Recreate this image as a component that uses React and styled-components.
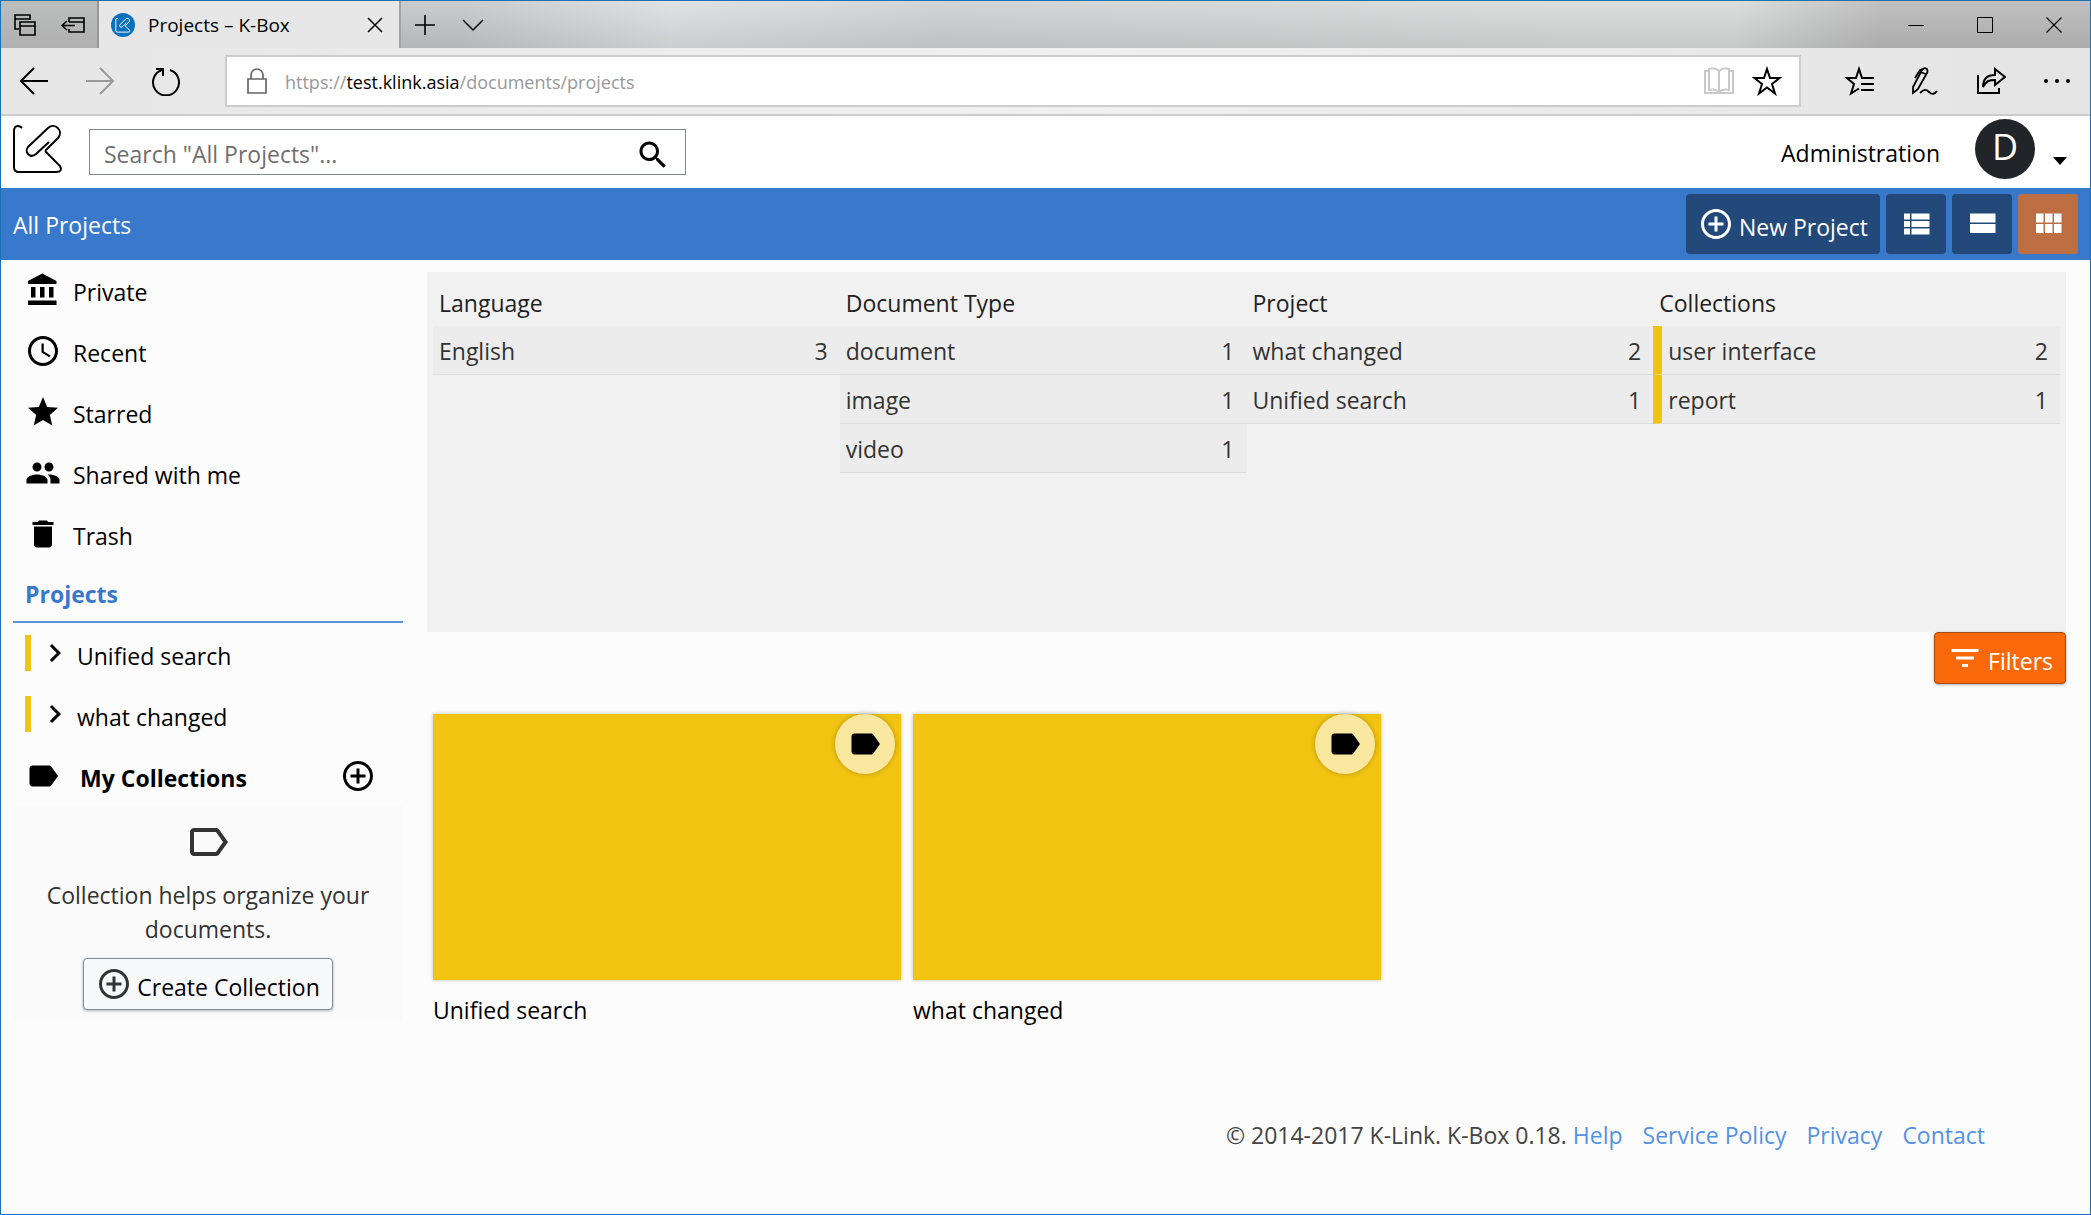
import React from "react";
import styled, { createGlobalStyle, css } from "styled-components";

const blue = "#3879cb";
const yellow = "#f0c410";

const GlobalStyle = createGlobalStyle`
  *, *::before, *::after { box-sizing: border-box; }
  body {
    margin: 0;
    background: #fcfcfc;
    color: #000;
    font-family: "Open Sans", "Noto Sans", sans-serif;
    font-size: 23px;
    line-height: 34px;
  }
  button, input { font: inherit; color: inherit; margin: 0; }
  button { border: 0; background: none; padding: 0; }
  a { color: inherit; text-decoration: none; }
  ul, p, h2, h3 { margin: 0; padding: 0; font: inherit; list-style: none; }
  svg { display: block; flex: none; }
`;

const Window = styled.div`
  display: flex;
  flex-direction: column;
  min-height: 100vh;
  border: 1px solid #1b71b6;
`;

/* ---- browser chrome ---- */

const TitleBar = styled.div`
  display: flex;
  height: 47px;
  background: linear-gradient(rgba(255, 255, 255, 0.1), rgba(0, 0, 0, 0.08)),
    linear-gradient(90deg, #c2c4c6 0, #c4c6c8 22%, #dcdfe1 32%, #cfd0d1 45%, #d8d9d9 75%, #d8d9d9 83%, #bababa 90%, #bababa 100%);
`;

const SetAside = styled.div`
  display: flex;
  align-items: center;
  gap: 25px;
  width: 98px;
  padding-left: 13px;
  border-right: 2px solid #999;
  background: linear-gradient(#bcbdbd, #b0b0b0);
`;

const Tab = styled.div`
  display: flex;
  align-items: center;
  width: 302px;
  padding: 0 16px 0 12px;
  border-right: 2px solid #a3a3a3;
  background: #e7e7e7;
  font-size: 19px;
`;

const TabTitle = styled.span`
  flex: 1;
  margin-left: 13px;
  white-space: nowrap;
`;

const TabTools = styled.div`
  display: flex;
  align-items: center;
  flex: 1;
  gap: 26px;
  padding-left: 13px;
`;

const WindowButtons = styled.div`
  display: flex;
  align-items: center;
  gap: 53px;
  padding-right: 28px;
`;

const Toolbar = styled.div`
  display: flex;
  align-items: center;
  height: 68px;
  padding-right: 19px;
  border-bottom: 2px solid #ccc;
  background: linear-gradient(90deg, #e6e6e6, #f0f0f0 50%, #e4e4e4);
`;

const NavButtons = styled.div`
  display: flex;
  align-items: center;
  gap: 36px;
  width: 224px;
  padding-left: 18px;
`;

const AddressBar = styled.div`
  display: flex;
  align-items: center;
  flex: 1;
  gap: 18px;
  height: 52px;
  padding: 0 17px 0 20px;
  border: 2px solid #ccc;
  background: #fff;
  font-size: 18px;
`;

const Url = styled.span`
  flex: 1;
  padding-top: 2px;
  color: #999;
  b { font-weight: 400; color: #000; }
`;

const ToolbarActions = styled.div`
  display: flex;
  align-items: center;
  gap: 37px;
  margin-left: 43px;
`;

/* ---- application header ---- */

const Header = styled.header`
  display: flex;
  align-items: center;
  height: 72px;
  padding: 0 23px 0 12px;
  background: #fff;
`;

const HomeLink = styled.a`
  padding-bottom: 6px;
`;

const SearchForm = styled.form`
  display: flex;
  align-items: center;
  width: 597px;
  height: 46px;
  margin-left: 27px;
  padding: 0 14px;
  border: 1px solid #7f8890;
  background: #fff;
`;

const SearchInput = styled.input`
  flex: 1;
  min-width: 0;
  padding: 3px 0 0;
  border: 0;
  background: none;
  outline: 0;
  &::placeholder { color: #6f6f6f; opacity: 1; }
`;

const SearchButton = styled.button`
  padding-top: 6px;
`;

const AdminLink = styled.a`
  margin-left: auto;
  padding-top: 2px;
`;

const Account = styled.button`
  display: flex;
  align-items: center;
  gap: 18px;
  margin-left: 35px;
`;

const Avatar = styled.span`
  width: 60px;
  height: 60px;
  margin-bottom: 6px;
  border-radius: 50%;
  background: #212529;
  color: #fff;
  font-size: 36px;
  line-height: 56px;
  text-align: center;
`;

const Caret = styled.span`
  margin-top: 18px;
  border: 7px solid transparent;
  border-top: 8px solid #000;
  border-bottom: 0;
`;

const ActionBar = styled.div`
  display: flex;
  align-items: center;
  gap: 6px;
  height: 72px;
  padding: 0 12px;
  background: ${blue};
  color: #fff;
`;

const PageTitle = styled.h2`
  flex: 1;
  padding-top: 2px;
`;

const BarButton = styled.button`
  display: flex;
  align-items: center;
  justify-content: center;
  gap: 5px;
  min-width: 60px;
  height: 60px;
  padding: 0 12px;
  border-radius: 4px;
  background: ${(p) => (p.$active ? "#bd6e43" : "#23487a")};
`;

const ButtonText = styled.span`
  padding-top: 6px;
`;

/* ---- body ---- */

const Body = styled.div`
  display: flex;
  flex: 1;
  padding: 0 24px 0 12px;
`;

const Sidebar = styled.nav`
  flex: none;
  width: 390px;
  margin-right: 24px;
`;

const NavLink = styled.a`
  display: flex;
  align-items: center;
  height: 61px;
  padding: 0 0 2px 12px;
  gap: 12px;
`;

const NavLabel = styled.span`
  padding-top: 5px;
`;

const ProjectsHeading = styled.h3`
  height: 58px;
  padding: 12px 12px 0;
  border-bottom: 2px solid #5a93dc;
  color: ${blue};
  font-weight: 700;
`;

const ProjectLink = styled.a`
  display: flex;
  align-items: center;
  height: 61px;
  margin-left: 12px;
  padding-bottom: 1px;
`;

const ProjectMark = styled.span`
  display: flex;
  align-items: center;
  width: 52px;
  height: 36px;
  padding-left: 6px;
  border-left: 6px solid ${yellow};
`;

const CollectionsHeading = styled.h3`
  display: flex;
  align-items: center;
  height: 61px;
  padding: 0 27px 0 12px;
  font-weight: 700;
`;

const CollectionsTitle = styled.span`
  flex: 1;
  padding: 5px 0 0 19px;
`;

const EmptyNote = styled.div`
  display: flex;
  flex-direction: column;
  align-items: center;
  gap: 12px;
  padding: 12px 24px;
  background: #fafafa;
  color: #333;
  text-align: center;
`;

const FramedButton = styled.button`
  display: flex;
  align-items: center;
  gap: 5px;
  height: 52px;
  padding: 0 12px;
  border: 1px solid #868c92;
  border-radius: 4px;
  background: #f8f9fb;
  box-shadow: 0 1px 3px rgba(0, 0, 0, 0.3);
  color: #000;
`;

const Main = styled.main`
  display: flex;
  flex: 1;
  flex-direction: column;
  min-width: 0;
  padding-top: 12px;
`;

const FilterPanel = styled.section`
  display: grid;
  grid-template-columns: repeat(4, 1fr);
  min-height: 360px;
  padding: 6px;
  background: #f1f1f1;
`;

const FilterTitle = styled.h3`
  height: 48px;
  padding: 8px 6px 0;
  color: #222;
`;

const FilterRow = styled.li`
  display: flex;
  justify-content: space-between;
  height: 49px;
  padding: 8px 12px 0 6px;
  border-bottom: 1px solid #dedede;
  background: #ececec;
  color: #333;
  ${(p) => p.$marked && css`border-left: 9px solid ${yellow};`}
`;

const FiltersButton = styled(FramedButton)`
  align-self: flex-end;
  border-color: #b04a0c;
  background: #fa6909;
  color: #fff;
`;

const CardGrid = styled.ul`
  display: flex;
  flex-wrap: wrap;
  gap: 12px;
  margin: 30px 6px 0;
`;

const Card = styled.li`
  width: 468px;
`;

const Thumb = styled.div`
  position: relative;
  height: 266px;
  margin-bottom: 13px;
  background: ${yellow};
  box-shadow: 0 0 4px rgba(0, 0, 0, 0.25);
`;

const Badge = styled.span`
  position: absolute;
  top: 0;
  right: 6px;
  display: flex;
  align-items: center;
  justify-content: center;
  width: 60px;
  height: 60px;
  border-radius: 50%;
  background: #f9e69f;
  box-shadow: 0 0 5px rgba(0, 0, 0, 0.25);
`;

const Footer = styled.footer`
  display: flex;
  justify-content: flex-end;
  gap: 20px;
  margin-top: auto;
  padding: 0 81px 62px 0;
  color: #444;
`;

const FooterLink = styled.a`
  color: #5492e4;
`;

/* ---- icons ---- */

const Fill = ({ size = 36, d, color = "currentColor" }) => (
  <svg width={size} height={size} viewBox="0 0 24 24" fill={color} aria-hidden="true">
    <path d={d} />
  </svg>
);

const Line = ({ w, h = w, sw = 2, color = "#000", children }) => (
  <svg width={w} height={h} viewBox={`0 0 ${w} ${h}`} fill="none" stroke={color} strokeWidth={sw} aria-hidden="true">
    {children}
  </svg>
);

const paths = {
  bank: "M4 10v7h3v-7H4zm6 0v7h3v-7h-3zM2 22h19v-3H2v3zm14-12v7h3v-7h-3zm-4.500-9L2 6v2h19V6l-9.500-5z",
  clock: "M11.990 2C6.470 2 2 6.480 2 12s4.470 10 9.990 10C17.520 22 22 17.520 22 12S17.520 2 11.990 2zM12 20c-4.420 0-8-3.580-8-8s3.580-8 8-8 8 3.580 8 8-3.580 8-8 8zm.5-13H11v6l5.250 3.150.75-1.230-4.500-2.670z",
  star: "M12 17.270L18.180 21l-1.640-7.030L22 9.240l-7.190-.61L12 2 9.190 8.630 2 9.240l5.460 4.730L5.820 21z",
  people: "M16 11c1.660 0 2.990-1.340 2.990-3S17.660 5 16 5c-1.660 0-3 1.340-3 3s1.340 3 3 3zm-8 0c1.660 0 2.990-1.340 2.990-3S9.660 5 8 5C6.340 5 5 6.340 5 8s1.340 3 3 3zm0 2c-2.330 0-7 1.170-7 3.500V19h14v-2.500c0-2.330-4.670-3.500-7-3.500zm8 0c-.29 0-.62.02-.97.05 1.160.84 1.970 1.970 1.970 3.450V19h6v-2.500c0-2.330-4.670-3.500-7-3.500z",
  trash: "M6 19c0 1.100.9 2 2 2h8c1.100 0 2-.9 2-2V7H6v12zM19 4h-3.500l-1-1h-5l-1 1H5v2h14V4z",
  chevron: "M10 6L8.590 7.410 13.170 12l-4.580 4.590L10 18l6-6z",
  label: "M17.630 5.840C17.270 5.330 16.670 5 16 5L5 5.010C3.900 5.010 3 5.900 3 7v10c0 1.100.9 1.990 2 1.990L16 19c.67 0 1.270-.33 1.630-.84L22 12l-4.370-6.160z",
  labelOutline: "M17.630 5.840C17.270 5.330 16.670 5 16 5L5 5.010C3.900 5.010 3 5.900 3 7v10c0 1.100.9 1.990 2 1.990L16 19c.67 0 1.270-.33 1.630-.84L22 12l-4.370-6.160zM16 17H5V7h11l3.550 5L16 17z",
  plus: "M13 7h-2v4H7v2h4v4h2v-4h4v-2h-4V7zm-1-5C6.480 2 2 6.480 2 12s4.480 10 10 10 10-4.480 10-10S17.520 2 12 2zm0 18c-4.410 0-8-3.590-8-8s3.590-8 8-8 8 3.590 8 8-3.590 8-8 8z",
  search: "M15.500 14h-.79l-.28-.27C15.410 12.590 16 11.110 16 9.500 16 5.910 13.090 3 9.500 3S3 5.910 3 9.500 5.910 16 9.500 16c1.610 0 3.090-.59 4.230-1.570l.27.28v.79l5 4.990L20.490 19l-4.990-5zm-6 0C7.010 14 5 11.990 5 9.500S7.010 5 9.500 5 14 7.010 14 9.500 11.990 14 9.500 14z",
  filter: "M10 18h4v-2h-4v2zM3 6v2h18V6H3zm3 7h12v-2H6v2z",
  list: "M4 14h4v-4H4v4zm0 5h4v-4H4v4zM4 9h4V5H4v4zm5 5h12v-4H9v4zm0 5h12v-4H9v4zM9 5v4h12V5H9z",
  stream: "M4 18h17v-6H4v6zM4 5v6h17V5H4z",
  grid: "M4 11h5V5H4v6zm0 7h5v-6H4v6zm6 0h5v-6h-5v6zm6 0h5v-6h-5v6zm-6-7h5V5h-5v6zm6-6v6h5V5h-5z",
};

const logoPath =
  "M9 3Q7 1 5 1Q1 1 1 6V42Q1 47 6 47H43Q50 47 47 41L33 27Q32 25 34 24L45 13C51 6 42 -3 35 3L15 22C11 27 17 34 23 29L36 17";

const Logo = () => (
  <svg width="49" height="48" viewBox="0 0 49 48" fill="none" stroke="#000" strokeWidth="2" aria-hidden="true">
    <path d={logoPath} />
  </svg>
);

const Favicon = () => (
  <svg width="24" height="24" viewBox="0 0 24 24" fill="none" aria-hidden="true">
    <circle cx="12" cy="12" r="12" fill="#0a70bf" />
    <g transform="translate(4.500 5) scale(.3)">
      <path d={logoPath} stroke="#fff" strokeWidth="3.200" />
    </g>
  </svg>
);

/* ---- data ---- */

const places = [
  ["Private", "bank"],
  ["Recent", "clock"],
  ["Starred", "star"],
  ["Shared with me", "people"],
  ["Trash", "trash"],
];

const projects = ["Unified search", "what changed"];

const filters = [
  { title: "Language", rows: [["English", 3]] },
  { title: "Document Type", rows: [["document", 1], ["image", 1], ["video", 1]] },
  { title: "Project", rows: [["what changed", 2], ["Unified search", 1]] },
  { title: "Collections", marked: true, rows: [["user interface", 2], ["report", 1]] },
];

const BrowserChrome = () => (
  <>
    <TitleBar>
      <SetAside>
        <button aria-label="Tabs you've set aside">
          <Line w={22} sw={1.6}>
            <path d="M5 15H1V1h15v5M1 5h15M6 8h15v13H6zM6 12h15" />
          </Line>
        </button>
        <button aria-label="Set these tabs aside">
          <Line w={24} h={22} sw={1.6}>
            <path d="M8 8V4h15v14H8v-3M8 8h15M1 11.500h13M6 7l-5 4.500 5 4.500" />
          </Line>
        </button>
      </SetAside>
      <Tab>
        <Favicon />
        <TabTitle>Projects – K-Box</TabTitle>
        <button aria-label="Close tab">
          <Line w={16} sw={1.5}><path d="M1 1l14 14M15 1L1 15" /></Line>
        </button>
      </Tab>
      <TabTools>
        <button aria-label="New tab">
          <Line w={22} sw={1.6}><path d="M11 1v20M1 11h20" /></Line>
        </button>
        <button aria-label="Tab previews">
          <Line w={22} h={14} sw={1.5}><path d="M1 2l10 10L21 2" /></Line>
        </button>
      </TabTools>
      <WindowButtons>
        <button aria-label="Minimize"><Line w={16} sw={1}><path d="M0 8.500h16" /></Line></button>
        <button aria-label="Maximize"><Line w={16} sw={1}><path d="M.5.5h15v15H.5z" /></Line></button>
        <button aria-label="Close"><Line w={16} sw={1.2}><path d="M.5.5l15 15M15.500.5l-15 15" /></Line></button>
      </WindowButtons>
    </TitleBar>
    <Toolbar>
      <NavButtons>
        <button aria-label="Back"><Line w={30} sw={2}><path d="M29 15H2M15 2L2 15l13 13" /></Line></button>
        <button aria-label="Forward"><Line w={30} sw={2} color="#999"><path d="M1 15h27M15 2l13 13-13 13" /></Line></button>
        <button aria-label="Refresh">
          <Line w={30} sw={2}><path d="M19 4A13 13 0 1 1 11 4M5 3h7v7" /></Line>
        </button>
      </NavButtons>
      <AddressBar>
        <Line w={20} h={26} sw={1.7} color="#666"><path d="M1 11h18v14H1zM4 11V7a6 6 0 0 1 12 0v4" /></Line>
        <Url>https://<b>test.klink.asia</b>/documents/projects</Url>
        <button aria-label="Reading view">
          <Line w={30} h={28} sw={2} color="#c9c9c9">
            <path d="M15 4v21M15 4C12 1 8 1 5 2v21c4-1 7-1 10 2M15 4c3-3 7-3 10-2v21c-4-1-7-1-10 2M5 4H1v22h28V4h-4" />
          </Line>
        </button>
        <button aria-label="Add to favorites">
          <Line w={30} sw={2}><path d="M15 3l3 9h9.500l-7.500 6 3 9.500-8-6-8 6 3-9.500-7.500-6H12z" /></Line>
        </button>
      </AddressBar>
      <ToolbarActions>
        <button aria-label="Hub">
          <Line w={30} sw={2}><path d="M30 12H18L15 3l-3 9H3l7 6-3 9.500 8-5M17 18h13M17 24h13" /></Line>
        </button>
        <button aria-label="Web note">
          <Line w={28} h={30} sw={1.8}>
            <path d="M2 27V21L11 4q2-3 5-1 1 2 0 4L7 23zM9 6l6 2M4 12L9 4l3-1M2 27l5-4M9 27c4-4 6-4 9-1s6 2 8-1" />
          </Line>
        </button>
        <button aria-label="Share">
          <Line w={30} sw={2}>
            <path d="M2 9v18h21v-5M7 21c0-9 5-12 12-12V3l10 8-10 8v-5c-6 0-9 1-12 7z" />
          </Line>
        </button>
        <button aria-label="More">
          <svg width="28" height="6" aria-hidden="true">
            <circle cx="3" cy="3" r="2" /><circle cx="14" cy="3" r="2" /><circle cx="25" cy="3" r="2" />
          </svg>
        </button>
      </ToolbarActions>
    </Toolbar>
  </>
);

export default function App() {
  return (
    <Window>
      <GlobalStyle />
      <BrowserChrome />
      <Header>
        <HomeLink href="#home" aria-label="K-Link"><Logo /></HomeLink>
        <SearchForm role="search">
          <SearchInput type="text" aria-label="Search" placeholder={'Search "All Projects"...'} />
          <SearchButton type="button" aria-label="Search"><Fill d={paths.search} /></SearchButton>
        </SearchForm>
        <AdminLink href="#administration">Administration</AdminLink>
        <Account aria-label="Account menu">
          <Avatar>D</Avatar>
          <Caret />
        </Account>
      </Header>
      <ActionBar>
        <PageTitle>All Projects</PageTitle>
        <BarButton><Fill d={paths.plus} /><ButtonText>New Project</ButtonText></BarButton>
        <BarButton aria-label="Details view"><Fill d={paths.list} /></BarButton>
        <BarButton aria-label="Tiles view"><Fill d={paths.stream} /></BarButton>
        <BarButton aria-label="Grid view" $active><Fill d={paths.grid} /></BarButton>
      </ActionBar>
      <Body>
        <Sidebar>
          {places.map(([label, icon]) => (
            <NavLink key={label} href={"#" + icon}>
              <Fill d={paths[icon]} />
              <NavLabel>{label}</NavLabel>
            </NavLink>
          ))}
          <ProjectsHeading>Projects</ProjectsHeading>
          {projects.map((name) => (
            <ProjectLink key={name} href="#project">
              <ProjectMark><Fill d={paths.chevron} /></ProjectMark>
              <NavLabel>{name}</NavLabel>
            </ProjectLink>
          ))}
          <CollectionsHeading>
            <Fill d={paths.label} />
            <CollectionsTitle>My Collections</CollectionsTitle>
            <button aria-label="Add collection"><Fill d={paths.plus} /></button>
          </CollectionsHeading>
          <EmptyNote>
            <Fill size={48} d={paths.labelOutline} />
            <p>Collection helps organize your documents.</p>
            <FramedButton><Fill d={paths.plus} color="#333" /><ButtonText>Create Collection</ButtonText></FramedButton>
          </EmptyNote>
        </Sidebar>
        <Main>
          <FilterPanel>
            {filters.map(({ title, marked, rows }) => (
              <div key={title}>
                <FilterTitle>{title}</FilterTitle>
                <ul>
                  {rows.map(([name, count]) => (
                    <FilterRow key={name} $marked={marked}>
                      <span>{name}</span>
                      <span>{count}</span>
                    </FilterRow>
                  ))}
                </ul>
              </div>
            ))}
          </FilterPanel>
          <FiltersButton><Fill d={paths.filter} /><ButtonText>Filters</ButtonText></FiltersButton>
          <CardGrid>
            {projects.map((name) => (
              <Card key={name}>
                <Thumb><Badge><Fill d={paths.label} /></Badge></Thumb>
                {name}
              </Card>
            ))}
          </CardGrid>
          <Footer>
            <span>© 2014-2017 K-Link. K-Box 0.18. <FooterLink href="#help">Help</FooterLink></span>
            <FooterLink href="#policy">Service Policy</FooterLink>
            <FooterLink href="#privacy">Privacy</FooterLink>
            <FooterLink href="#contact">Contact</FooterLink>
          </Footer>
        </Main>
      </Body>
    </Window>
  );
}
